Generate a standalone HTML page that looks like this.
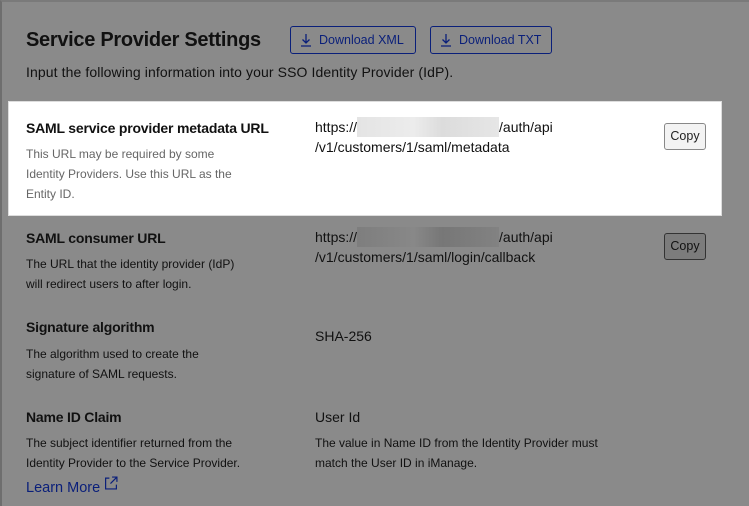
<!DOCTYPE html>
<html><head><meta charset="utf-8"><style>
*{margin:0;padding:0;box-sizing:border-box}
body{width:749px;height:506px;background:#8a8a8a;font-family:"Liberation Sans",sans-serif;position:relative;overflow:hidden;color:#111}
.frame{position:absolute;left:0;top:0;width:749px;height:506px;border-left:2px solid #6e6e6e;border-top:2px solid #7a7a7a}
.a{position:absolute;white-space:nowrap}
h1{position:absolute;left:26px;top:29px;font-size:20px;font-weight:bold;color:#111;letter-spacing:-0.3px}
.btn{position:absolute;top:26px;height:28px;border:1px solid #0a1f7a;border-radius:3px;color:#0a1f7a;font-size:12.5px;line-height:26px;padding-left:28px}
.btn svg{position:absolute;left:9px;top:6px}
.lbl{font-size:14px;font-weight:bold;letter-spacing:-0.2px}
.desc{font-size:12px;line-height:20px}
.val{font-size:14px;line-height:20px}
.box{position:absolute;left:8px;top:101px;width:714px;height:115px;background:#fff;border:1px solid #ddd}
.copy{position:absolute;left:664px;width:42px;height:27px;border:1px solid #888;border-radius:3px;font-size:12.5px;text-align:center;line-height:25px;background:#f3f3f3;color:#222}
.blur{display:inline-block;width:142px;height:20px;vertical-align:top;background:linear-gradient(90deg,#e4e4e4,#ececec 40%,#dcdcdc 60%,#e6e6e6)}
</style></head><body>
<div class="frame"></div>
<h1>Service Provider Settings</h1>
<div class="btn" style="left:290px;width:126px"><svg width="12" height="14" viewBox="0 0 12 14"><path d="M6 1v9M2.5 6.5L6 10l3.5-3.5M1 13h10" stroke="#0a1f7a" stroke-width="1.3" fill="none"/></svg>Download XML</div>
<div class="btn" style="left:430px;width:122px"><svg width="12" height="14" viewBox="0 0 12 14"><path d="M6 1v9M2.5 6.5L6 10l3.5-3.5M1 13h10" stroke="#0a1f7a" stroke-width="1.3" fill="none"/></svg>Download TXT</div>
<div class="a" style="left:26px;top:64px;font-size:14px;letter-spacing:0.1px">Input the following information into your SSO Identity Provider (IdP).</div>

<div class="box"></div>
<div class="a lbl" style="left:26px;top:120px">SAML service provider metadata URL</div>
<div class="a desc" style="left:26px;top:144px;color:#666">This URL may be required by some<br>Identity Providers. Use this URL as the<br>Entity ID.</div>
<div class="a val" style="left:315px;top:117px">https://<span class="blur"></span>/auth/api<br>/v1/customers/1/saml/metadata</div>
<div class="copy" style="top:123px">Copy</div>

<div class="a lbl" style="left:26px;top:230px">SAML consumer URL</div>
<div class="a desc" style="left:26px;top:254px">The URL that the identity provider (IdP)<br>will redirect users to after login.</div>
<div class="a val" style="left:315px;top:227px">https://<span class="blur" style="background:linear-gradient(90deg,#7e7e7e,#888 40%,#777 60%,#828282)"></span>/auth/api<br>/v1/customers/1/saml/login/callback</div>
<div class="copy" style="top:233px;background:#7c7c7c;border-color:#333;color:#111">Copy</div>

<div class="a lbl" style="left:26px;top:319px">Signature algorithm</div>
<div class="a desc" style="left:26px;top:344px">The algorithm used to create the<br>signature of SAML requests.</div>
<div class="a val" style="left:315px;top:326px">SHA-256</div>

<div class="a lbl" style="left:26px;top:409px">Name ID Claim</div>
<div class="a desc" style="left:26px;top:433px">The subject identifier returned from the<br>Identity Provider to the Service Provider.</div>
<div class="a" style="left:26px;top:476px;font-size:14.5px;color:#0a1f7a">Learn More <svg width="14" height="14" viewBox="0 0 13 13" style="vertical-align:2px"><path d="M5 2H1.5v10h10V8M7.5 1H12v4.5M12 1L6 7" stroke="#0a1f7a" stroke-width="1.1" fill="none"/></svg></div>
<div class="a val" style="left:315px;top:407px">User Id</div>
<div class="a desc" style="left:315px;top:433px">The value in Name ID from the Identity Provider must<br>match the User ID in iManage.</div>
</body></html>
